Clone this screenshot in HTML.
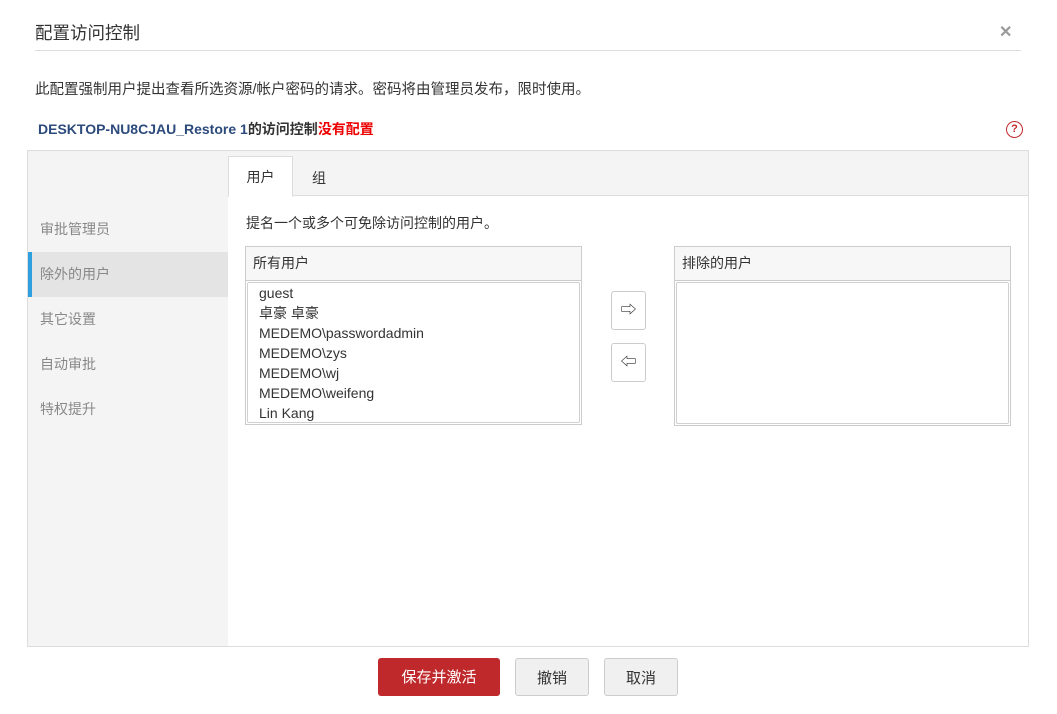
<!DOCTYPE html>
<html><head><meta charset="utf-8"><style>
*{box-sizing:border-box;margin:0;padding:0}
body{width:1057px;height:714px;background:#fff;font-family:"Liberation Sans","Noto Sans CJK SC",sans-serif;color:#333;position:relative;overflow:hidden}
.a{position:absolute;white-space:nowrap}
.nav{position:absolute;left:0;width:201px;height:45px;line-height:45px;padding-left:12px;font-size:14px;color:#888}
.box{position:absolute;border:1px solid #ccc;background:#fff}
.box .h{height:34px;line-height:32px;background:#f7f7f7;border-bottom:1px solid #ccc;padding-left:7px;font-size:14px}
.box .l{position:absolute;left:1px;right:1px;top:35px;bottom:1px;border:1px solid #d0d0d0;border-radius:2px}
.ab{position:absolute;left:611px;width:35px;height:39px;border:1px solid #ccc;border-radius:3px;background:#fff;text-align:center;line-height:38px;font-size:16px}
.btn{position:absolute;top:658px;height:38px;line-height:39px;text-align:center;font-size:15px;border-radius:3px}
</style></head><body>
<div class="a" style="left:35px;top:20px;font-size:17.5px;color:#333">配置访问控制</div>
<div class="a" style="left:999px;top:22px;font-size:16px;color:#999;font-weight:bold">✕</div>
<div class="a" style="left:35px;top:50px;width:986px;height:1px;background:#ddd"></div>
<div class="a" style="left:35px;top:78px;font-size:14.5px">此配置强制用户提出查看所选资源/帐户密码的请求。密码将由管理员发布，限时使用。</div>
<div class="a" style="left:38px;top:119px;font-size:14px;font-weight:bold;color:#2c4a7c">DESKTOP-NU8CJAU_Restore 1<span style="color:#333">的访问控制</span><span style="color:#e00">没有配置</span></div>
<div class="a" style="left:1006px;top:121px;width:17px;height:17px;border:1.5px solid #c0292b;border-radius:50%;color:#c0292b;font-size:11px;font-weight:bold;text-align:center;line-height:14px">?</div>
<div class="a" style="left:27px;top:150px;width:1002px;height:497px;background:#f4f4f4;border:1px solid #ddd">
  <div class="nav" style="top:56px">审批管理员</div>
  <div class="nav" style="top:101px;background:#e4e4e4;border-left:4px solid #2ea0e0;padding-left:8px">除外的用户</div>
  <div class="nav" style="top:146px">其它设置</div>
  <div class="nav" style="top:191px">自动审批</div>
  <div class="nav" style="top:236px">特权提升</div>
  <div class="a" style="left:200px;top:44px;right:0;bottom:0;background:#fff;border-top:1px solid #ddd"></div>
  <div class="a" style="left:200px;top:5px;width:65px;height:41px;background:#fff;border:1px solid #ddd;border-bottom:none;text-align:center;line-height:40px;font-size:14px">用户</div>
  <div class="a" style="left:284px;top:17px;font-size:14px">组</div>
</div>
<div class="a" style="left:246px;top:213px;font-size:14px">提名一个或多个可免除访问控制的用户。</div>
<div class="box" style="left:245px;top:246px;width:337px;height:179px"><div class="h">所有用户</div><div class="l" style="padding:0 0 0 11px;font-size:14px;line-height:20px">guest<br>卓豪 卓豪<br>MEDEMO\passwordadmin<br>MEDEMO\zys<br>MEDEMO\wj<br>MEDEMO\weifeng<br>Lin Kang</div></div>
<div class="ab" style="top:291px">⇨</div>
<div class="ab" style="top:343px">⇦</div>
<div class="box" style="left:674px;top:246px;width:337px;height:180px"><div class="h">排除的用户</div><div class="l"></div></div>
<div class="btn" style="left:378px;width:122px;background:#c0292b;color:#fff">保存并激活</div>
<div class="btn" style="left:515px;width:74px;background:#f0f0f0;border:1px solid #ccc">撤销</div>
<div class="btn" style="left:604px;width:74px;background:#f0f0f0;border:1px solid #ccc">取消</div>
</body></html>
